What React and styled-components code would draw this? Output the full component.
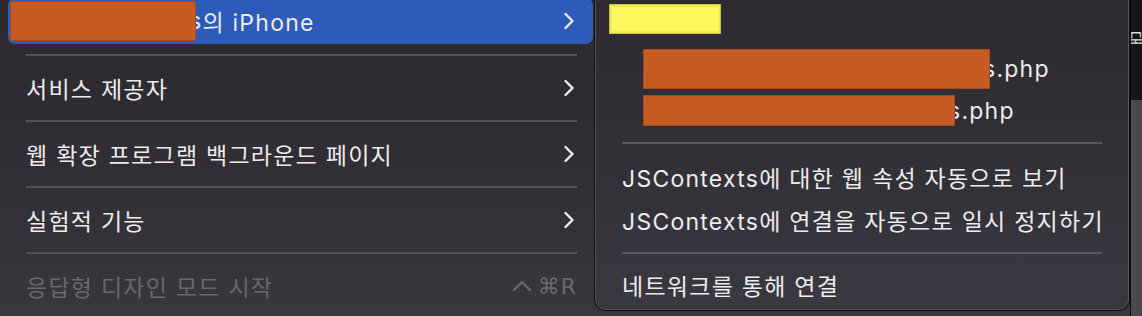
import styled, { createGlobalStyle } from "styled-components";

const GlobalStyle = createGlobalStyle`
  html, body { margin: 0; padding: 0; background: #2c2a2f; }
  body { font-family: Inter, "Noto Sans CJK KR", sans-serif; -webkit-font-smoothing: antialiased; }
`;

const Chevron = () => (
  <svg width="12" height="18" viewBox="0 0 12 18" fill="none">
    <polyline points="2.5,2 9.5,9 2.5,16" stroke="#ececee" strokeWidth="2.4" strokeLinecap="round" strokeLinejoin="round" />
  </svg>
);

const Caret = () => (
  <svg width="20" height="14" viewBox="0 0 20 14" fill="none">
    <polyline points="2,11 10,3 18,11" stroke="#69686e" strokeWidth="2.4" strokeLinecap="round" strokeLinejoin="round" />
  </svg>
);

const mainItems = [
  { label: "서비스 제공자", arrow: true },
  { label: "웹 확장 프로그램 백그라운드 페이지", arrow: true },
  { label: "실험적 기능", arrow: true },
  { label: "응답형 디자인 모드 시작", shortcut: "⌘R", disabled: true },
];

const App = () => {
  return (
    <>
      <GlobalStyle />
      <Page>
        <MainMenu>
          <MenuItem $active>
            <Label>
              <Redact $w={186} $h={40} style={{ marginLeft: -16 }} />
              <Cut>s</Cut>의 iPhone
            </Label>
            <Chevron />
          </MenuItem>
          {mainItems.map((item) => (
            <div key={item.label}>
              <Separator />
              <MenuItem $disabled={item.disabled}>
                <Label>{item.label}</Label>
                {item.arrow && <Chevron />}
                {item.shortcut && (
                  <Shortcut>
                    <Caret />
                    {item.shortcut}
                  </Shortcut>
                )}
              </MenuItem>
            </div>
          ))}
        </MainMenu>

        <SubMenu>
          <SubHeader>
            <Highlight />
          </SubHeader>
          <FileRow $h={42}>
            <Redact $w={347} $h={40} />
            <Cut>s</Cut>.php
          </FileRow>
          <FileRow $h={41}>
            <Redact $w={312} $h={31} />
            <Cut>s</Cut>.php
          </FileRow>
          <SubSeparator />
          <SubItem $h={44}>JSContexts에 대한 웹 속성 자동으로 보기</SubItem>
          <SubItem $h={42}>JSContexts에 연결을 자동으로 일시 정지하기</SubItem>
          <SubSeparator />
          <SubItem $h={40}>네트워크를 통해 연결</SubItem>
        </SubMenu>

        <Edge>
          <EdgeTop>
            <EdgeGlyph>대</EdgeGlyph>
          </EdgeTop>
          <EdgeBottom />
        </Edge>
      </Page>
    </>
  );
};

const Page = styled.div`
  display: flex;
  width: 1142px;
  height: 316px;
  overflow: hidden;
  background: linear-gradient(180deg, #2b292e 0%, #323036 60%, #39373e 100%);
  color: #ececee;
`;

const MainMenu = styled.div`
  width: 585px;
  flex-shrink: 0;
  padding: 0 1px 0 8px;
  display: flex;
  flex-direction: column;
`;

const MenuItem = styled.div`
  display: flex;
  align-items: center;
  justify-content: space-between;
  padding: 0 18px 0 18px;
  border-radius: 7px;
  font-size: 23px;
  letter-spacing: 1.25px;
  background: ${(p) => (p.$active ? "#2c5bba" : "transparent")};
  color: ${(p) => (p.$disabled ? "#69686e" : "#ececee")};
  margin-top: ${(p) => (p.$active ? "-2px" : "0")};
  height: ${(p) => (p.$active ? "46px" : "44px")};
`;

const Label = styled.span`
  display: flex;
  align-items: center;
  white-space: nowrap;
`;

const Separator = styled.div`
  height: 2px;
  margin: 10px 16px 10px 18px;
  background: #545258;
`;

const Shortcut = styled.span`
  display: flex;
  align-items: center;
  gap: 6px;
  font-family: "DejaVu Sans", Inter, sans-serif;
  font-size: 22px;
  letter-spacing: 1px;
  color: #69686e;
  margin-right: -2px;
`;

const Redact = styled.span`
  display: inline-block;
  position: relative;
  z-index: 1;
  width: ${(p) => p.$w}px;
  height: ${(p) => p.$h}px;
  background: #c85a24;
  box-shadow: inset 0 0 0 1px #a64a1f;
`;

const Cut = styled.span`
  margin-left: -7px;
`;

const SubMenu = styled.div`
  width: 536px;
  height: 311px;
  flex-shrink: 0;
  box-sizing: border-box;
  border: 1px solid #0e0e10;
  border-top: none;
  border-radius: 0 0 12px 12px;
  box-shadow: inset 1px 0 0 #56555a, inset -1px 0 0 #56555a, inset 0 -1px 0 #56555a;
  background: linear-gradient(180deg, #2d2b31 0%, #333138 55%, #3a3840 100%);
  padding: 0 27px 0 14px;
  font-size: 23px;
  letter-spacing: 1.25px;
  display: flex;
  flex-direction: column;
`;

const SubHeader = styled.div`
  height: 48px;
  display: flex;
  align-items: flex-start;
  padding-top: 4px;
  box-sizing: border-box;
`;

const Highlight = styled.span`
  width: 112px;
  height: 30px;
  box-sizing: border-box;
  background: #fef85e;
  border: 1px solid #c8c24a;
  box-shadow: inset 0 0 0 2px #f2ec50;
`;

const FileRow = styled.div`
  height: ${(p) => p.$h}px;
  display: flex;
  align-items: center;
  padding-left: 34px;
  white-space: nowrap;
`;

const SubSeparator = styled.div`
  height: 2px;
  margin: 11px 0 11px 13px;
  background: #58565c;
`;

const SubItem = styled.div`
  height: ${(p) => p.$h}px;
  display: flex;
  align-items: center;
  padding-left: 13px;
  white-space: nowrap;
`;

const Edge = styled.div`
  flex: 1;
  display: flex;
  flex-direction: column;
  border-left: 1px solid #0c0c0c;
`;

const EdgeTop = styled.div`
  height: 100px;
  background: #161616;
  overflow: hidden;
  display: flex;
  padding-top: 26px;
  box-sizing: border-box;
`;

const EdgeGlyph = styled.span`
  display: inline-block;
  transform: rotate(90deg);
  font-size: 16px;
  color: #d8d8d8;
  margin-left: -2px;
  height: 24px;
`;

const EdgeBottom = styled.div`
  flex: 1;
  background: #4a494e;
`;

export default App;
